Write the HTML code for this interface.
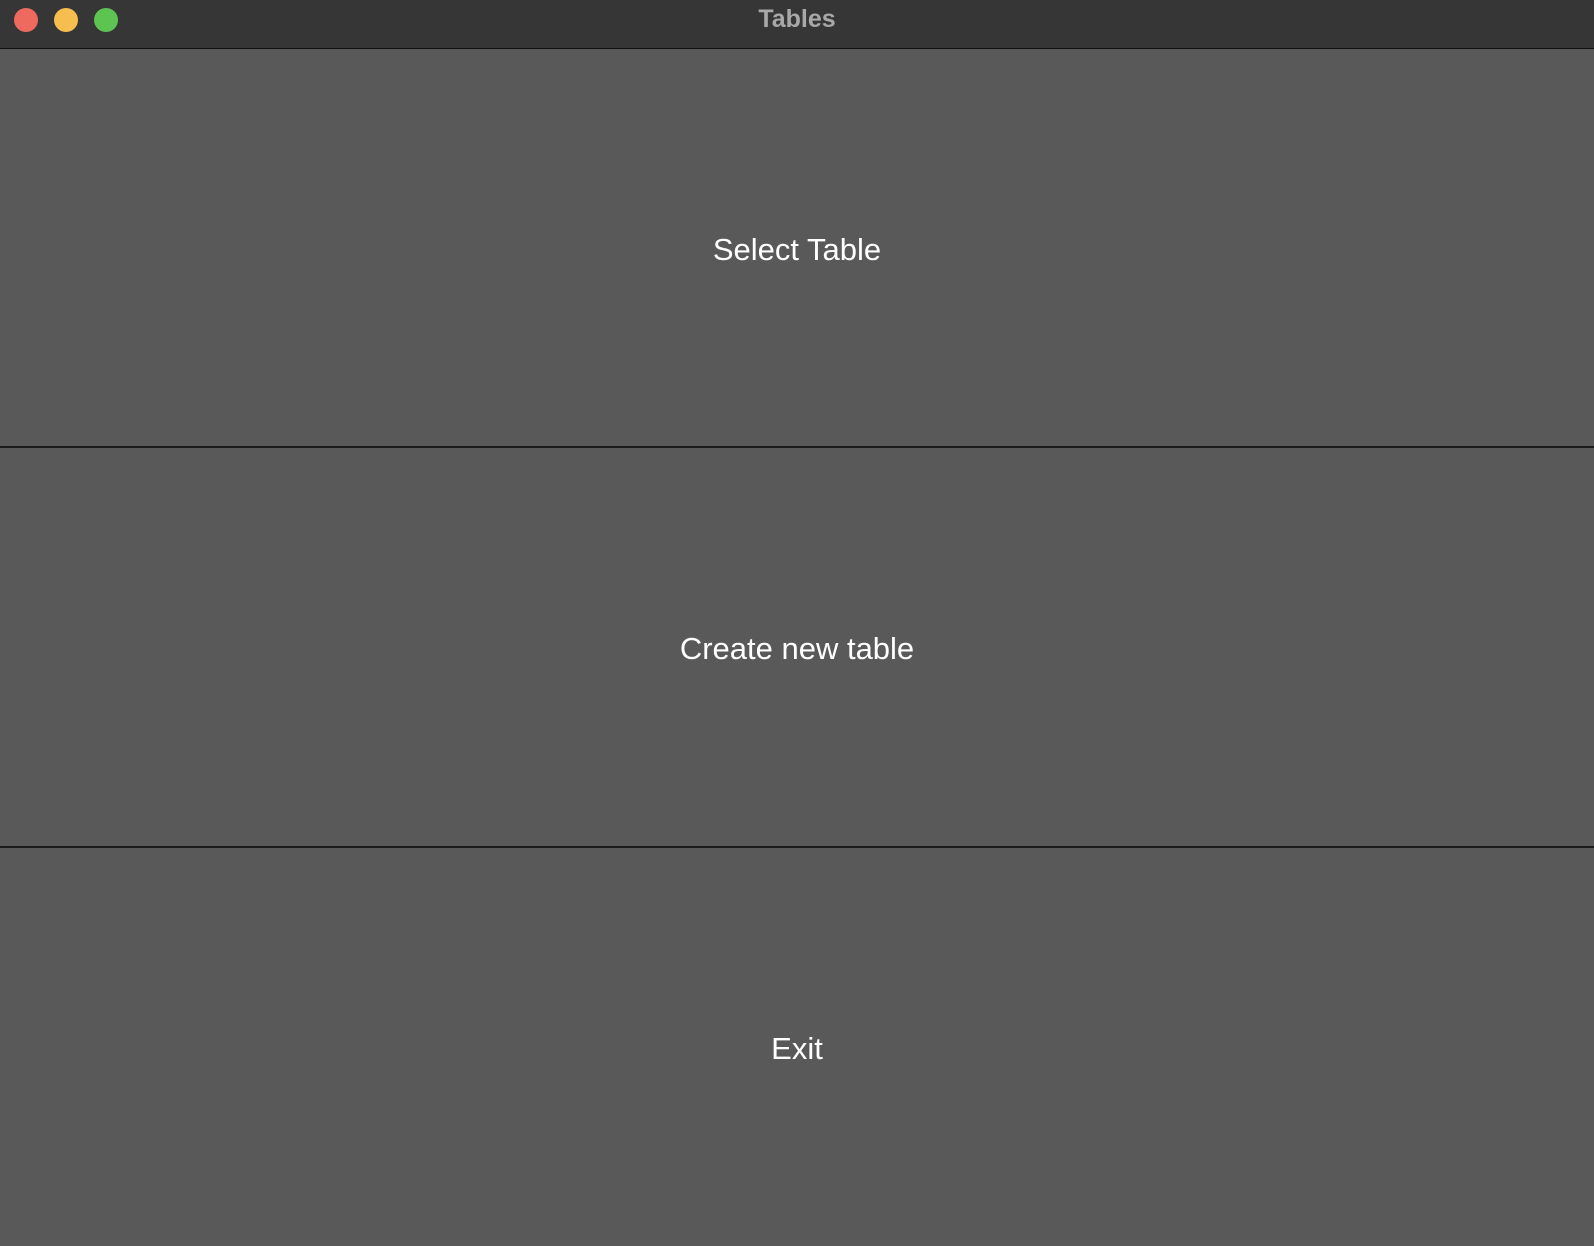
<!DOCTYPE html>
<html><head><style>
html,body{margin:0;padding:0;width:1594px;height:1246px;overflow:hidden;background:#595959;font-family:"Liberation Sans",sans-serif}
.tb{position:absolute;left:0;top:0;width:1594px;height:48px;background:#363636;border-bottom:1px solid #111}
.dot{position:absolute;top:8px;width:24px;height:24px;border-radius:50%}
.title{position:absolute;left:0;right:0;top:5px;text-align:center;color:#a8a8a8;font-weight:bold;font-size:25px}
.p{position:absolute;left:0;width:1594px;display:flex;align-items:center;justify-content:center;color:#fff;font-size:31px;background:#595959;padding-top:3px;box-sizing:border-box}
.ln{position:absolute;left:0;width:1594px;height:2px;background:#1a1a1a}
</style></head><body>
<div class="tb">
<div class="dot" style="left:14px;background:#ee6a5f"></div>
<div class="dot" style="left:54px;background:#f5be4f"></div>
<div class="dot" style="left:94px;background:#5ec451"></div>
<div class="title">Tables</div>
</div>
<div class="p" style="top:49px;height:398px">Select Table</div>
<div class="ln" style="top:446px"></div>
<div class="p" style="top:448px;height:398px">Create new table</div>
<div class="ln" style="top:846px"></div>
<div class="p" style="top:848px;height:398px">Exit</div>
</body></html>
